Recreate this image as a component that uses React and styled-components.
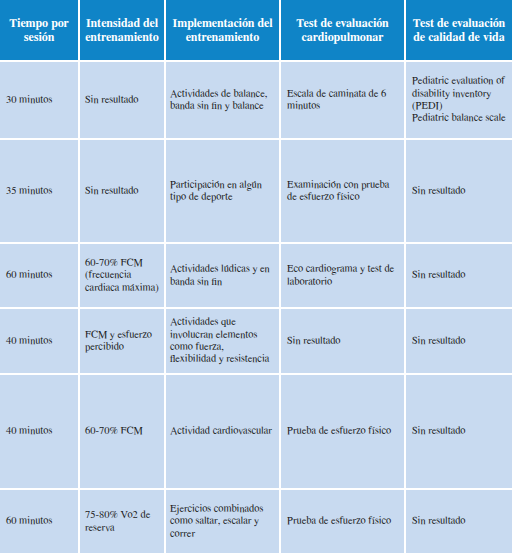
import React from "react";
import styled, { createGlobalStyle } from "styled-components";

const Global = createGlobalStyle`
  html, body { margin: 0; padding: 0; background: #ffffff; overflow: hidden; }
`;

const Table = styled.div`
  display: grid;
  grid-template-columns: 78px 84px 113px 123px 106px;
  grid-template-rows: 60px 76px 102px 63px 64px 113px 63px;
  gap: 2px;
  background: #ffffff;
  width: max-content;
  padding-right: 2px;
`;

const HeadCell = styled.div`
  background: #0f84c7;
  color: #ffffff;
  font-family: 'FreeSerif', 'DejaVu Serif';
  font-weight: bold;
  font-size: 12px;
  line-height: 14px;
  display: flex;
  align-items: center;
  justify-content: center;
  text-align: center;
  padding: 0 2px;
`;

const Cell = styled.div`
  background: #c8daf0;
  color: #1c1c1c;
  font-family: 'FreeSerif', 'DejaVu Serif';
  font-size: 10.5px;
  line-height: 12.3px;
  display: flex;
  align-items: center;
  padding: 0 ${(p) => p.$pad || 5}px;
  white-space: nowrap;
`;

const headers = [
  ["Tiempo por", "sesión"],
  ["Intensidad del", "entrenamiento"],
  ["Implementación del", "entrenamiento"],
  ["Test de evaluación", "cardiopulmonar"],
  ["Test de evaluación", "de calidad de vida"],
];

const rows = [
  [
    ["30 minutos"],
    ["Sin resultado"],
    ["Actividades de balance,", "banda sin fin y balance"],
    ["Escala de caminata de 6", "minutos"],
    ["Pediatric evaluation of", "disability inventory", "(PEDI)", "Pediatric balance scale"],
  ],
  [
    ["35 minutos"],
    ["Sin resultado"],
    ["Participación en algún", "tipo de deporte"],
    ["Examinación con prueba", "de esfuerzo físico"],
    ["Sin resultado"],
  ],
  [
    ["60 minutos"],
    ["60-70% FCM", "(frecuencia", "cardiaca máxima)"],
    ["Actividades lúdicas y en", "banda sin fin"],
    ["Eco cardiograma y test de", "laboratorio"],
    ["Sin resultado"],
  ],
  [
    ["40 minutos"],
    ["FCM y esfuerzo", "percibido"],
    ["Actividades que", "involucran elementos", "como fuerza,", "flexibilidad y resistencia"],
    ["Sin resultado"],
    ["Sin resultado"],
  ],
  [
    ["40 minutos"],
    ["60-70% FCM"],
    ["Actividad cardiovascular"],
    ["Prueba de esfuerzo físico"],
    ["Sin resultado"],
  ],
  [
    ["60 minutos"],
    ["75-80% Vo2 de", "reserva"],
    ["Ejercicios combinados", "como saltar, escalar y", "correr"],
    ["Prueba de esfuerzo físico"],
    ["Sin resultado"],
  ],
];

const pads = [6, 5, 4, 6, 6];

const Lines = ({ lines }) => (
  <div>
    {lines.map((l, i) => (
      <React.Fragment key={i}>
        {i > 0 && <br />}
        {l}
      </React.Fragment>
    ))}
  </div>
);

export default function App() {
  return (
    <>
      <Global />
      <Table>
        {headers.map((h, i) => (
          <HeadCell key={"h" + i}>
            <Lines lines={h} />
          </HeadCell>
        ))}
        {rows.map((r, ri) =>
          r.map((c, ci) => (
            <Cell key={ri + "-" + ci} $pad={pads[ci]}>
              <Lines lines={c} />
            </Cell>
          ))
        )}
      </Table>
    </>
  );
}
